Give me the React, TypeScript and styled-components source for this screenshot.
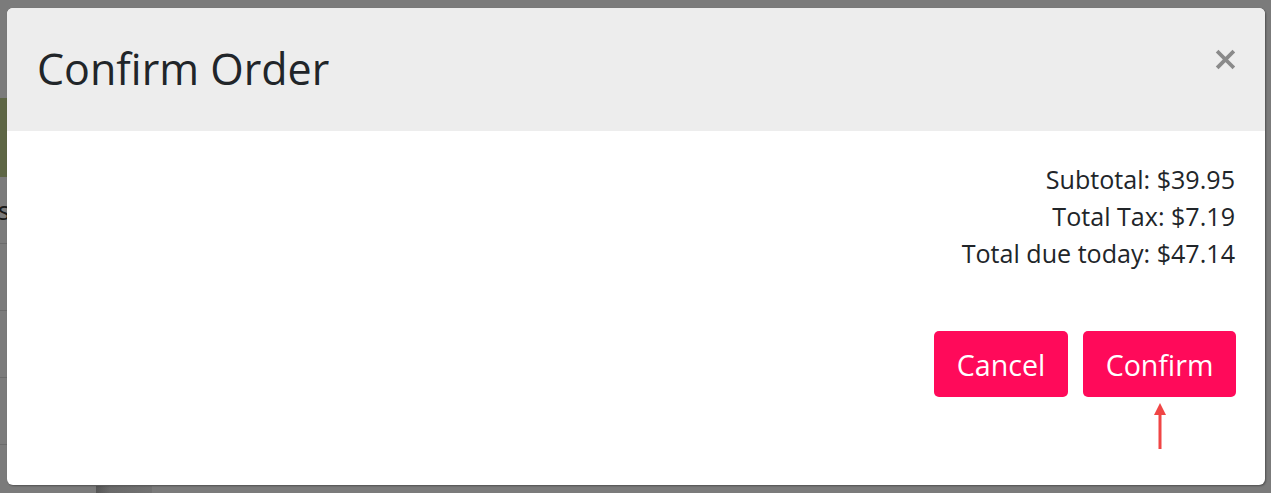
import React from "react";
import styled, { createGlobalStyle } from "styled-components";

const GlobalStyle = createGlobalStyle`
  html, body {
    margin: 0;
    padding: 0;
    height: 100%;
    overflow: hidden;
  }
  body {
    font-family: "Open Sans", "Liberation Sans", sans-serif;
    background: #fff;
  }
`;

const Page = styled.div`
  position: relative;
  width: 1271px;
  height: 493px;
  overflow: hidden;
  background: #f6f6f6;
`;

const PageContent = styled.div`
  display: flex;
  flex-direction: column;
  width: 160px;
`;

const TopBar = styled.div`
  height: 98px;
`;

const Banner = styled.div`
  height: 79px;
  background: #bccc8a;
`;

const ListRow = styled.div<{ $h: number }>`
  height: ${(p) => p.$h}px;
  border-bottom: 1px solid #d6d6d6;
  display: flex;
  align-items: center;
  justify-content: flex-end;
  font-size: 25px;
  color: #333;
  padding-right: 150px;
  box-sizing: border-box;
`;

const Backdrop = styled.div`
  position: absolute;
  inset: 0;
  background: rgba(0, 0, 0, 0.5);
`;

const SideShade = styled.div`
  position: absolute;
  left: 96px;
  top: 486px;
  width: 56px;
  height: 7px;
  background: linear-gradient(90deg, #555 0%, #6a6a6a 25%, #727272 100%);
`;

const Modal = styled.div`
  position: absolute;
  top: 8px;
  left: 7px;
  width: 1258px;
  height: 477px;
  background: #fff;
  border-radius: 6px;
  overflow: hidden;
  box-shadow: 1px 1px 2px rgba(0, 0, 0, 0.35);
  display: flex;
  flex-direction: column;
`;

const Header = styled.div`
  height: 123px;
  background: #ededed;
  padding: 0 30px;
  display: flex;
  align-items: center;
  position: relative;
`;

const Title = styled.h1`
  margin: 0;
  font-size: 43px;
  font-weight: 400;
  color: #212529;
  line-height: 1;
  padding-bottom: 3px;
`;

const CloseButton = styled.button`
  position: absolute;
  top: 41px;
  right: 29px;
  width: 21px;
  height: 21px;
  padding: 0;
  border: 0;
  background: none;
  cursor: pointer;
  display: flex;
`;

const Body = styled.div`
  padding: 30px 30px 0;
  display: flex;
  flex-direction: column;
  align-items: flex-end;
`;

const Line = styled.div`
  font-size: 25.1px;
  line-height: 37px;
  color: #212529;
`;

const Footer = styled.div`
  display: flex;
  justify-content: flex-end;
  gap: 15px;
  padding: 0 29px;
  margin-top: 59px;
`;

const ButtonWrap = styled.div`
  position: relative;
`;

const Button = styled.button<{ $w: number }>`
  width: ${(p) => p.$w}px;
  height: 66px;
  border: 0;
  border-radius: 5px;
  background: #ff0a5a;
  color: #fff;
  font-family: "Open Sans", "Liberation Sans", sans-serif;
  font-size: 28.6px;
  cursor: pointer;
  padding: 0;
`;

const Arrow = styled.svg`
  position: absolute;
  top: calc(100% + 6px);
  left: 50%;
  margin-left: -6px;
`;

export default function App() {
  return (
    <>
      <GlobalStyle />
      <Page>
        <PageContent>
          <TopBar />
          <Banner />
          <ListRow $h={67}>s</ListRow>
          <ListRow $h={67} />
          <ListRow $h={67} />
          <ListRow $h={67} />
        </PageContent>
        <Backdrop />
        <SideShade />
        <Modal>
          <Header>
            <Title>Confirm Order</Title>
            <CloseButton aria-label="Close">
              <svg width="21" height="21" viewBox="0 0 21 21">
                <path
                  d="M3.5 3.5 L17.5 17.5 M17.5 3.5 L3.5 17.5"
                  stroke="#8a8a8a"
                  strokeWidth="3.8"
                  strokeLinecap="square"
                />
              </svg>
            </CloseButton>
          </Header>
          <Body>
            <Line>Subtotal: $39.95</Line>
            <Line>Total Tax: $7.19</Line>
            <Line>Total due today: $47.14</Line>
          </Body>
          <Footer>
            <ButtonWrap>
              <Button $w={134}>Cancel</Button>
            </ButtonWrap>
            <ButtonWrap>
              <Button $w={153}>Confirm</Button>
              <Arrow width="12" height="46" viewBox="0 0 12 46">
                <path d="M6 0 L12 12 L0 12 Z" fill="#f04545" />
                <rect x="4.5" y="10" width="3" height="36" fill="#f04545" />
              </Arrow>
            </ButtonWrap>
          </Footer>
        </Modal>
      </Page>
    </>
  );
}
